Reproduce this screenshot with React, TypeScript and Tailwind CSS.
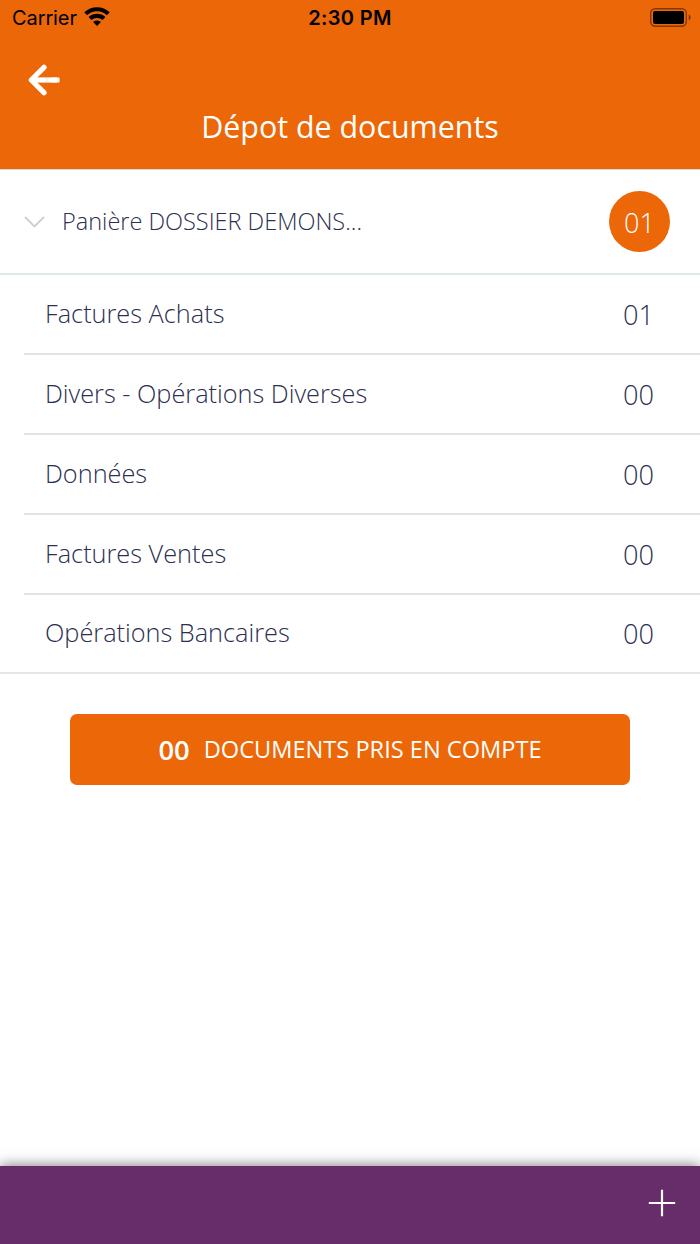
const rows = [
  { label: "Factures Achats", count: "01" },
  { label: "Divers - Opérations Diverses", count: "00" },
  { label: "Données", count: "00" },
  { label: "Factures Ventes", count: "00" },
  { label: "Opérations Bancaires", count: "00" },
];

export default function App() {
  return (
    <div className="flex h-[1244px] w-[700px] flex-col overflow-hidden bg-white font-['Open_Sans',sans-serif] text-[#2b2f50]">
      <header className="flex h-[169px] shrink-0 flex-col bg-[#ec6707] text-white">
        <div className="grid h-9 shrink-0 grid-cols-3 items-center pl-3 pr-2 font-['Inter',sans-serif] text-[20px] text-black">
          <div className="flex items-center gap-[7px]">
            <span className="tracking-[-0.1px]">Carrier</span>
            <svg className="mb-[3px]" width="26" height="19" viewBox="0 0 26 19" fill="none" stroke="black" strokeWidth="4.1">
              <path d="M1.7 6.8C8 .7 18 .7 24.3 6.8M6 11.6c4-3.7 10-3.7 14 0" />
              <path d="M13 18.9l-3.9-3.8c2.2-2 5.6-2 7.8 0z" fill="black" stroke="none" />
            </svg>
          </div>
          <span className="-ml-1 text-center font-semibold tracking-[0.35px]">2:30 PM</span>
          <svg className="mb-[2px] justify-self-end" width="42" height="19" viewBox="0 0 42 19">
            <rect x=".7" y=".7" width="35.6" height="17.6" rx="4.5" fill="none" stroke="black" strokeOpacity=".45" strokeWidth="1.4" />
            <rect x="3" y="3" width="31" height="13" rx="2" />
            <path d="M38.8 6.3q3.6 3.2 0 6.4z" opacity=".55" />
          </svg>
        </div>
        <svg className="ml-7 mt-7 shrink-0" width="33" height="32" viewBox="0 0 33 32" fill="none" stroke="white" strokeWidth="5.2" strokeLinejoin="round">
          <path d="M16 3.3L3.3 16 16 28.7" strokeLinecap="round" />
          <path d="M4 16h25" />
          <rect x="24" y="13.4" width="7.6" height="5.2" rx="1" fill="white" stroke="none" />
        </svg>
        <h1 className="mt-[9px] text-center text-[30.4px] leading-[44px]">Dépot de documents</h1>
      </header>
      <section className="flex h-[106px] shrink-0 items-center border-b-2 border-t border-b-[#dfe7eb] border-t-[#d8dce0] pl-6 pr-[30px]">
        <svg width="21" height="14" viewBox="0 0 21 14" fill="none" stroke="#cccfd0" strokeWidth="1.8"><path d="M1 2l9.5 9.5L20 2" /></svg>
        <span className="ml-[17px] flex-1 text-[23.5px] font-light">Panière DOSSIER DEMONS...</span>
        <span className="flex h-[61px] w-[61px] items-center justify-center rounded-full bg-[#ec6707] pt-[4px] text-[27px] font-light text-white">01</span>
      </section>
      <ul className="h-[399px] shrink-0 border-b-2 border-[#e2e6e9]">
        {rows.map((row, index) => (
          <li key={row.label} className={`ml-6 flex items-center justify-between pl-[21px] pr-[46px] font-light ${index < 4 ? "h-20 border-b-2 border-[#e1e3e4]" : "h-[75px]"}`}>
            <span className="text-[25.3px]">{row.label}</span>
            <span className="pt-[3px] text-[27.2px]">{row.count}</span>
          </li>
        ))}
      </ul>
      <button className="mx-[70px] mt-10 flex h-[71px] shrink-0 items-center justify-center gap-[14px] rounded-[7px] bg-[#ec6707] text-white">
        <span className="text-[27.4px] font-semibold">00</span>
        <span className="pt-px text-[23.6px]">DOCUMENTS PRIS EN COMPTE</span>
      </button>
      <footer className="mt-auto flex h-[78px] shrink-0 items-center justify-end bg-[#662d6a] pb-[5px] pr-6 shadow-[0_-1px_12px_rgba(0,0,0,.5)]">
        <svg width="28" height="28" viewBox="0 0 28 28" stroke="white" strokeWidth="2.2"><path d="M14 .8v26.4M.8 14h26.4" /></svg>
      </footer>
    </div>
  );
}
